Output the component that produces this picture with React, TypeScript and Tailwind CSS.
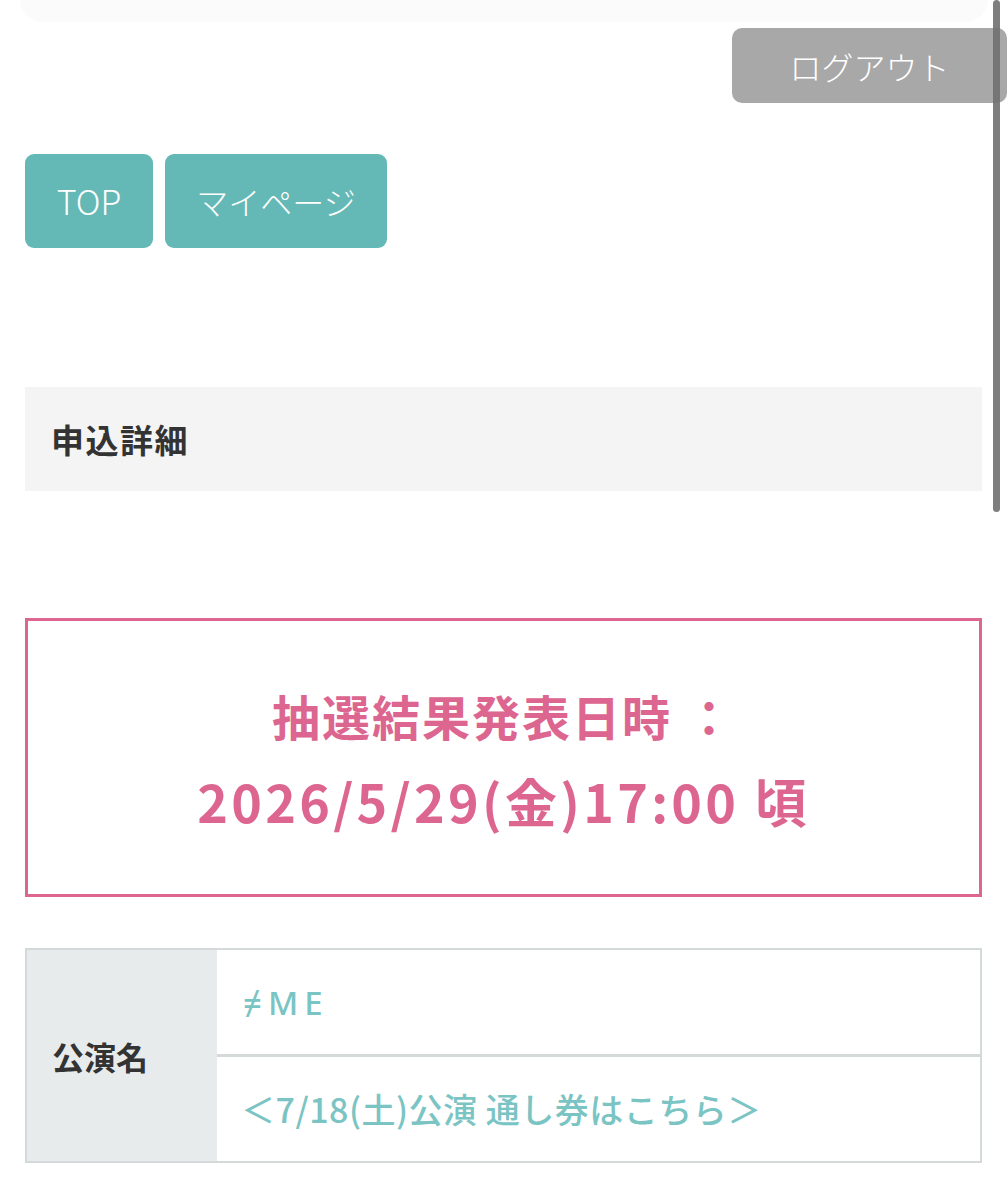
export default function App() {
  return (
    <div className="relative min-h-[1200px] w-full overflow-hidden bg-white font-['Noto_Sans_CJK_JP',sans-serif] text-[#333]">
      <div className="mx-[20px] h-[22px] rounded-b-[60px] bg-[#fbfbfb]" />

      <div className="mt-[6px] flex justify-end pr-[1px]">
        <button className="flex h-[75px] w-[275px] items-center justify-center rounded-[10px] bg-[#a8a8a8] text-[32px] font-light leading-none text-white">
          ログアウト
        </button>
      </div>

      <div className="mt-[51px] flex gap-[12px] px-[25px]">
        <button className="flex h-[94px] w-[128px] items-center justify-center rounded-[9px] bg-[#64b9b6] text-[34px] font-light leading-none text-white">
          TOP
        </button>
        <button className="flex h-[94px] w-[222px] items-center justify-center rounded-[9px] bg-[#64b9b6] text-[32px] font-light leading-none text-white">
          マイページ
        </button>
      </div>

      <div className="ml-[25px] mr-[26px] mt-[139px] flex h-[104px] items-center bg-[#f4f4f4] pl-[26px]">
        <h2 className="text-[33px] font-bold leading-none tracking-[1.5px] text-[#333]">申込詳細</h2>
      </div>

      <div className="ml-[25px] mr-[26px] mt-[127px] flex h-[279px] flex-col items-center justify-center border-[3px] border-[#dc6690] text-[#dd6690]">
        <p className="text-[48px] font-bold leading-[85px] tracking-[2px]">抽選結果発表日時 ：</p>
        <p className="text-[52px] font-bold leading-[85px] tracking-[3.3px]">2026/5/29(金)17:00 頃</p>
      </div>

      <div className="ml-[25px] mr-[26px] mt-[51px] flex h-[215px] border-2 border-[#d4d9d9]">
        <div className="flex w-[190px] shrink-0 items-center bg-[#e8ebec] pl-[25px]">
          <span className="text-[32px] font-bold leading-none text-[#333]">公演名</span>
        </div>
        <div className="flex flex-1 flex-col">
          <div className="flex flex-1 items-center pl-[26px]">
            <span className="font-['Noto_Sans','Noto_Sans_CJK_JP',sans-serif] text-[33px] font-medium leading-none tracking-[6px] text-[#7bc4c4]">≠ME</span>
          </div>
          <div className="h-[3px] bg-[#d4d9d9]" />
          <div className="flex flex-1 items-center pl-[24px]">
            <span className="text-[34px] font-medium leading-none tracking-[0.5px] text-[#7bc4c4]">＜7/18(土)公演 通し券はこちら＞</span>
          </div>
        </div>
      </div>

      <div className="absolute right-[8px] top-0 h-[512px] w-[7px] rounded-full bg-[#707070]/90" />
    </div>
  );
}
